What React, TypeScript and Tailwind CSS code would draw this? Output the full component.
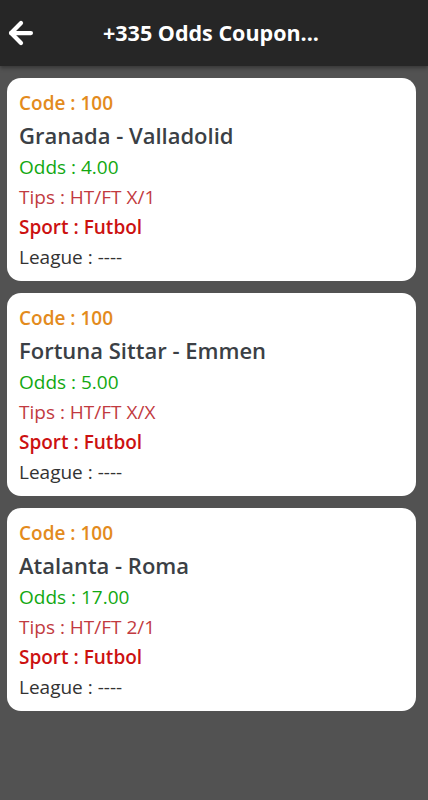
import { ArrowLeft } from 'lucide-react';

interface Coupon {
  code: string;
  match: string;
  odds: string;
  tips: string;
  sport: string;
  league: string;
}

const coupons: Coupon[] = [
  { code: '100', match: 'Granada - Valladolid', odds: '4.00', tips: 'HT/FT X/1', sport: 'Futbol', league: '----' },
  { code: '100', match: 'Fortuna Sittar - Emmen', odds: '5.00', tips: 'HT/FT X/X', sport: 'Futbol', league: '----' },
  { code: '100', match: 'Atalanta - Roma', odds: '17.00', tips: 'HT/FT 2/1', sport: 'Futbol', league: '----' },
];

function CouponCard({ c }: { c: Coupon }) {
  return (
    <div className="bg-white rounded-[14px] px-3 pt-[10px] pb-[9px]">
      <div className="h-[30px] leading-[30px] text-[19px] font-semibold text-[#e38b1d]">Code : {c.code}</div>
      <div className="h-[34px] leading-[34px] text-[22px] font-semibold text-[#3b3f45]">{c.match}</div>
      <div className="h-[30px] leading-[30px] text-[19px] text-[#12a812]">Odds : {c.odds}</div>
      <div className="h-[30px] leading-[30px] text-[19px] text-[#c23a40]">Tips : {c.tips}</div>
      <div className="h-[30px] leading-[30px] text-[19px] font-semibold text-[#cc1111]">Sport : {c.sport}</div>
      <div className="h-[30px] leading-[30px] text-[19px] text-[#333333]">League : {c.league}</div>
    </div>
  );
}

export default function App() {
  return (
    <div className="min-h-screen bg-[#525252] font-['Open_Sans',sans-serif]">
      <header className="h-[66px] bg-[#262626] flex items-center relative shadow-[0_2px_4px_rgba(0,0,0,0.35)]">
        <button className="pl-[4px] text-white">
          <ArrowLeft size={34} strokeWidth={3} />
        </button>
        <h1 className="absolute left-0 right-0 text-center text-white font-bold text-[21.5px] pointer-events-none pr-[6px]">
          +335 Odds Coupon...
        </h1>
      </header>
      <main className="flex flex-col gap-3 pt-3 pl-[7px] pr-3">
        {coupons.map((c, i) => (
          <CouponCard key={i} c={c} />
        ))}
      </main>
    </div>
  );
}
